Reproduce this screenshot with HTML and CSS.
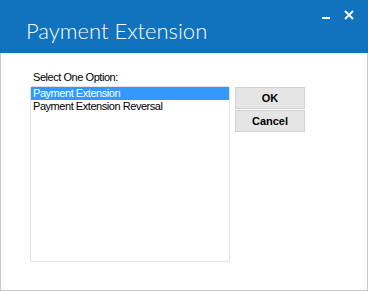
FILE: index.html
```html
<!DOCTYPE html>
<html>
<head>
<meta charset="utf-8">
<link rel="stylesheet" href="styles.css">
</head>
<body>
<div class="window">
  <div class="titlebar">
    <div class="title">Payment Extension</div>
    <div class="controls">
      <svg class="ctl" width="12" height="12" viewBox="0 0 12 12"><rect x="2" y="8" width="8" height="2" fill="#fff"/></svg>
      <svg class="ctl" width="12" height="12" viewBox="0 0 12 12"><path d="M2 2 L10 10 M10 2 L2 10" stroke="#fff" stroke-width="1.8" fill="none"/></svg>
    </div>
  </div>
  <div class="content">
    <div class="label">Select One Option:</div>
    <div class="row">
      <div class="listbox">
        <div class="item selected">Payment Extension</div>
        <div class="item">Payment Extension Reversal</div>
      </div>
      <div class="buttons">
        <button class="btn">OK</button>
        <button class="btn">Cancel</button>
      </div>
    </div>
  </div>
</div>
</body>
</html>
```
FILE: styles.css
```css
html, body { margin: 0; padding: 0; }
body { width: 368px; height: 291px; background: #fff; font-family: "Liberation Sans", Arial, sans-serif; }
.window {
  box-sizing: border-box;
  width: 368px;
  height: 291px;
  border: 1px solid #c9c9c9;
  border-top: none;
  display: flex;
  flex-direction: column;
  background: #fff;
}
.titlebar {
  height: 53px;
  margin: 0 -1px;
  background: #1172be;
  display: flex;
  justify-content: space-between;
  align-items: flex-start;
  flex-shrink: 0;
}
.title {
  font-family: "Lato", "Open Sans", sans-serif;
  font-weight: 300;
  font-size: 22px;
  color: #fff;
  margin: 17px 0 0 26px;
  line-height: 28px;
}
.controls {
  display: flex;
  gap: 11px;
  margin: 9px 13px 0 0;
}
.ctl { display: block; }
.content {
  padding: 18px 0 0 29px;
}
.label {
  font-size: 11px;
  line-height: 13px;
  letter-spacing: -0.45px;
  color: #000;
  padding-left: 3px;
  height: 13px;
}
.row {
  display: flex;
  margin-top: 2px;
  gap: 5px;
}
.listbox {
  box-sizing: border-box;
  width: 200px;
  height: 176px;
  border: 1px solid #e1e2ea;
  border-radius: 2px;
  background: #fff;
}
.item {
  font-size: 11px;
  line-height: 13px;
  letter-spacing: -0.45px;
  height: 13px;
  padding-left: 2px;
  color: #000;
  white-space: nowrap;
}
.item.selected {
  background: #3399ff;
  color: #fff;
}
.buttons {
  display: flex;
  flex-direction: column;
  gap: 1px;
  padding-top: 1px;
}
.btn {
  box-sizing: border-box;
  width: 70px;
  height: 22px;
  margin: 0;
  padding: 0;
  background: #e5e5e5;
  border: 1px solid #d2d2d2;
  font-family: "Liberation Sans", Arial, sans-serif;
  font-weight: bold;
  font-size: 11px;
  color: #000;
}
```
